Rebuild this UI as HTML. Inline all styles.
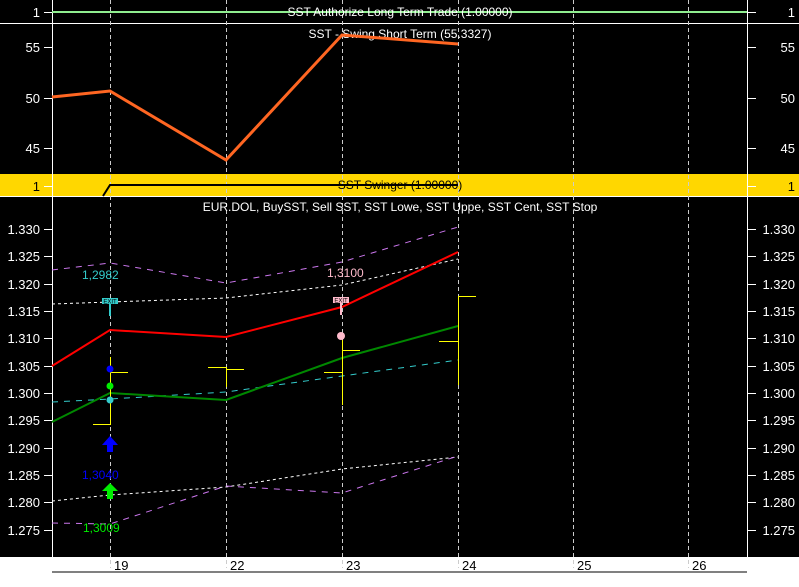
<!DOCTYPE html>
<html><head><style>
html,body{margin:0;padding:0;background:#000;}
svg{display:block;font-family:"Liberation Sans",sans-serif;}
</style></head><body>
<svg width="799" height="587" viewBox="0 0 799 587" xmlns="http://www.w3.org/2000/svg">
<rect width="799" height="587" fill="#000"/>
<rect x="0" y="174" width="799" height="22" fill="#ffd700"/>
<rect x="0" y="557" width="799" height="30" fill="#fff"/>
<rect x="747" y="557" width="52" height="30" fill="#fff"/>
<line x1="52" y1="572" x2="747" y2="572" stroke="#000" stroke-width="1"/>
<line x1="0" y1="23.5" x2="799" y2="23.5" stroke="#fff"/>
<line x1="0" y1="196.5" x2="799" y2="196.5" stroke="#fff"/>
<!-- axes -->
<line x1="52.5" y1="0" x2="52.5" y2="560" stroke="#fff"/>
<line x1="747.5" y1="0" x2="747.5" y2="557" stroke="#fff"/>
<!-- vertical grid -->
<g stroke="#ccc" stroke-dasharray="4,3">
<line x1="110.5" y1="0" x2="110.5" y2="568"/>
<line x1="226.5" y1="0" x2="226.5" y2="568"/>
<line x1="342.5" y1="0" x2="342.5" y2="568"/>
<line x1="458.5" y1="0" x2="458.5" y2="568"/>
<line x1="573.5" y1="0" x2="573.5" y2="568"/>
<line x1="688.5" y1="0" x2="688.5" y2="568"/>
</g>
<g fill="#000" font-size="13">
<text x="114" y="570">19</text><text x="230" y="570">22</text><text x="346" y="570">23</text><text x="462" y="570">24</text><text x="577" y="570">25</text><text x="692" y="570">26</text>
</g>
<!-- ticks -->
<g stroke="#fff">
<path d="M44 12.5H52M44 47.5H52M44 98.5H52M44 148.5H52M44 186.5H52M44 229.5H52M44 256.5H52M44 284.5H52M44 311.5H52M44 338.5H52M44 366.5H52M44 393.5H52M44 420.5H52M44 448.5H52M44 475.5H52M44 502.5H52M44 530.5H52"/>
<path d="M748 12.5H756M748 47.5H756M748 98.5H756M748 148.5H756M748 186.5H756M748 229.5H756M748 256.5H756M748 284.5H756M748 311.5H756M748 338.5H756M748 366.5H756M748 393.5H756M748 420.5H756M748 448.5H756M748 475.5H756M748 502.5H756M748 530.5H756"/>
</g>
<g font-size="13" fill="#fff" text-anchor="end">
<text x="40" y="17">1</text><text x="40" y="52">55</text><text x="40" y="103">50</text><text x="40" y="153">45</text>
<text x="40" y="191" fill="#000">1</text>
<text x="40" y="234">1.330</text><text x="40" y="261">1.325</text><text x="40" y="289">1.320</text><text x="40" y="316">1.315</text><text x="40" y="343">1.310</text><text x="40" y="371">1.305</text><text x="40" y="398">1.300</text><text x="40" y="425">1.295</text><text x="40" y="453">1.290</text><text x="40" y="480">1.285</text><text x="40" y="507">1.280</text><text x="40" y="535">1.275</text>
<text x="795" y="17">1</text><text x="795" y="52">55</text><text x="795" y="103">50</text><text x="795" y="153">45</text>
<text x="795" y="191" fill="#000">1</text>
<text x="795" y="234">1.330</text><text x="795" y="261">1.325</text><text x="795" y="289">1.320</text><text x="795" y="316">1.315</text><text x="795" y="343">1.310</text><text x="795" y="371">1.305</text><text x="795" y="398">1.300</text><text x="795" y="425">1.295</text><text x="795" y="453">1.290</text><text x="795" y="480">1.285</text><text x="795" y="507">1.280</text><text x="795" y="535">1.275</text>
</g>
<!-- top panel -->
<line x1="52" y1="12" x2="747" y2="12" stroke="#90ee90" stroke-width="2"/>
<text x="400" y="16" fill="#fff" font-size="12" text-anchor="middle">SST Authorize Long Term Trade (1.00000)</text>
<text x="400" y="38" fill="#fff" font-size="12" text-anchor="middle">SST - Swing Short Term (55.3327)</text>
<polyline points="52,97 110,91 226,160 342,35 458,44" fill="none" stroke="#ff6622" stroke-width="3"/>
<polyline points="103,196 110,185 458,185" fill="none" stroke="#000" stroke-width="2"/>
<text x="400" y="189" fill="#000" font-size="12" text-anchor="middle">SST Swinger (1.00000)</text>
<text x="400" y="211" fill="#fff" font-size="12" text-anchor="middle">EUR.DOL, BuySST, Sell SST, SST Lowe, SST Uppe, SST Cent, SST Stop</text>
<!-- main chart -->
<polyline points="52,270 110,263 226,283 342,262 458,227" fill="none" stroke="#cc77ee" stroke-dasharray="6,6"/>
<polyline points="52,304 110,302 226,298 342,285 458,259" fill="none" stroke="#fff" stroke-dasharray="3,3"/>
<polyline points="52,402 110,399 226,392 342,376 458,360" fill="none" stroke="#33cccc" stroke-dasharray="6,6"/>
<polyline points="52,501 110,495 226,487 342,469 458,457" fill="none" stroke="#fff" stroke-dasharray="3,3"/>
<polyline points="52,523 110,524 226,486 342,493 458,456" fill="none" stroke="#cc77ee" stroke-dasharray="6,6"/>
<polyline points="52,366 110,330 226,337 342,307 458,252" fill="none" stroke="#ff0000" stroke-width="2"/>
<polyline points="52,422 110,393 226,400 342,358 458,326" fill="none" stroke="#008800" stroke-width="2"/>
<g stroke="#ffff00" fill="none">
<path d="M110.5 357V425M110 372.5H128M93 424.5H110"/>
<path d="M226.5 367V387M208 367.5H226M226 369.5H244"/>
<path d="M342.5 340V405M342 350.5H360M324 372.5H342"/>
<path d="M458.5 296V385M458 296.5H476M439 341.5H458"/>
</g>
<circle cx="110" cy="369" r="3.5" fill="#0000ff"/>
<circle cx="110" cy="386" r="3.5" fill="#00ee00"/>
<circle cx="110" cy="400" r="3.5" fill="#33cccc"/>
<circle cx="341" cy="336" r="4" fill="#ffbbcc"/>
<path d="M110 436L118 445H113V452H107V445H102Z" fill="#0000ff"/>
<path d="M110 483L118 491H113V499H107V491H102Z" fill="#00ee00"/>
<g font-size="12">
<text x="82" y="279" fill="#33cccc">1,2982</text>
<text x="327" y="277" fill="#ffbbcc">1,3100</text>
<text x="82" y="479" fill="#0000ff">1,3040</text>
<text x="83" y="532" fill="#00ee00">1,3009</text>
</g>
<rect x="102" y="298" width="16" height="6" fill="#33cccc"/>
<rect x="109" y="304" width="2" height="12" fill="#33cccc"/>
<text x="110" y="303.5" font-size="6" fill="#000" text-anchor="middle">EXIT</text>
<rect x="333" y="297" width="16" height="6" fill="#ffbbcc"/>
<rect x="340" y="303" width="2" height="12" fill="#ffbbcc"/>
<text x="341" y="302.5" font-size="6" fill="#000" text-anchor="middle">EXIT</text>
</svg>
</body></html>
